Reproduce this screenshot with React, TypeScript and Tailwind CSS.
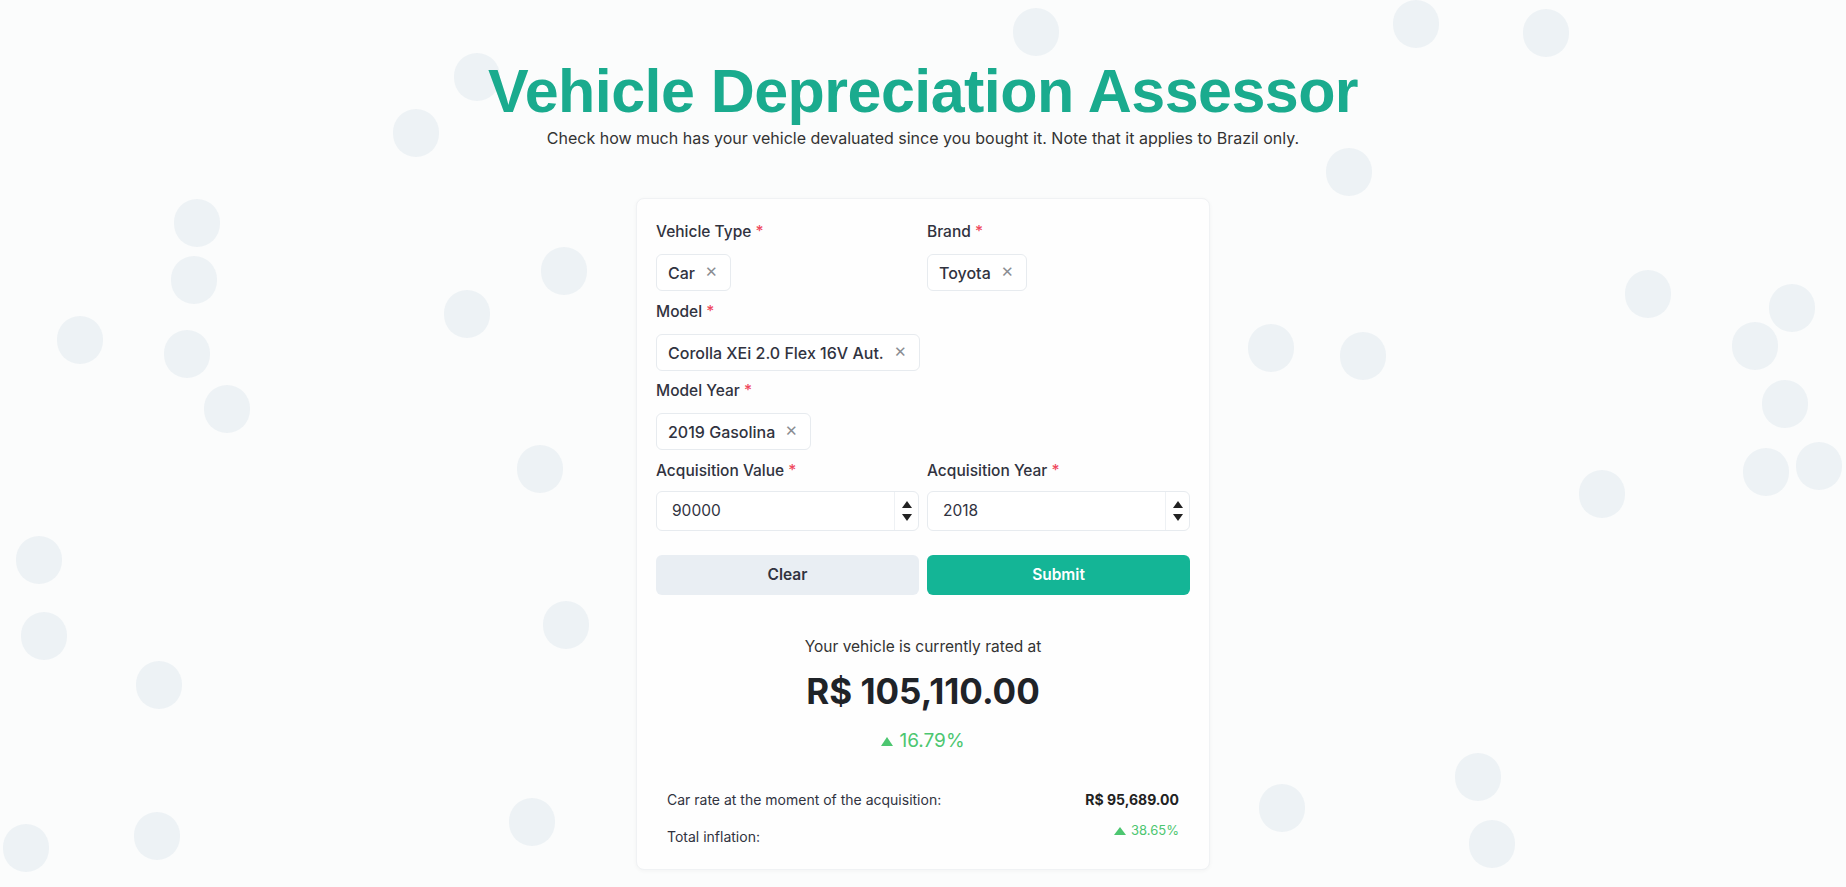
const BUBBLES: [number, number][] = [
  [477, 77], [416, 133], [197, 223], [194, 280], [80, 340], [187, 354], [227, 409],
  [564, 271], [467, 314], [540, 469], [39, 560], [44, 636], [159, 685], [566, 625],
  [26, 848], [157, 836], [532, 822], [1036, 32], [1416, 24], [1546, 33], [1349, 172],
  [1271, 348], [1363, 356], [1648, 294], [1792, 308], [1755, 346], [1785, 404],
  [1602, 494], [1766, 472], [1819, 466], [1282, 808], [1478, 777], [1492, 844],
];

function Label({ text }: { text: string }) {
  return (
    <div className="h-5 text-[15.5px] leading-5 font-medium text-[#31333f]">
      {text} <span className="text-[#ef4b5f]">*</span>
    </div>
  );
}

function Chip({ text }: { text: string }) {
  return (
    <div className="inline-flex h-[37px] items-center gap-[10px] rounded-md border border-[#e7ebef] bg-white pl-[11px] pr-[12px] text-[16px] font-medium text-[#31333f]">
      <span>{text}</span>
      <span className="text-[15px] text-[#8a8d93]">✕</span>
    </div>
  );
}

function NumberBox({ value }: { value: string }) {
  return (
    <div className="flex h-[40px] items-stretch rounded-md border border-[#e7ebef] bg-white">
      <div className="flex flex-1 items-center pl-[15px] text-[15.5px] text-[#31333f]">{value}</div>
      <div className="flex w-[24px] flex-col items-center justify-between border-l border-[#eef1f4] py-[9px]">
        <span className="h-0 w-0 border-x-[5px] border-b-[7px] border-x-transparent border-b-[#222]" />
        <span className="h-0 w-0 border-x-[5px] border-t-[7px] border-x-transparent border-t-[#222]" />
      </div>
    </div>
  );
}

function Up({ size }: { size: string }) {
  return <span className={`inline-block h-0 w-0 border-x-[6px] border-x-transparent border-b-[#4cc670] ${size}`} />;
}

export default function App() {
  return (
    <div className="relative h-[887px] w-full overflow-hidden bg-[#fbfcfc] font-['Inter','Liberation_Sans',sans-serif]">
      {BUBBLES.map(([x, y], i) => (
        <div
          key={i}
          className="absolute h-[48px] w-[46px] rounded-full bg-[#edf2f5]"
          style={{ left: x - 23, top: y - 24 }}
        />
      ))}

      <div className="relative flex flex-col items-center">
        <h1 className="mt-[57px] font-['Liberation_Sans',Arial,sans-serif] text-[61px] font-bold leading-[68px] tracking-[-0.55px] text-[#1aab8e]">
          Vehicle Depreciation Assessor
        </h1>
        <p className="mt-[3px] text-[16px] leading-5 text-[#333]">
          Check how much has your vehicle devaluated since you bought it. Note that it applies to Brazil only.
        </p>

        {/* Form card */}
        <div className="mt-[50px] w-[574px] rounded-lg border border-[#f0f2f4] bg-[#fefefe] px-[19px] pb-[25px] pt-[23px] shadow-[0_1px_4px_rgba(0,0,0,0.04)]">
          <div className="grid grid-cols-2 gap-x-2">
            <div>
              <Label text="Vehicle Type" />
              <div className="mt-3"><Chip text="Car" /></div>
            </div>
            <div>
              <Label text="Brand" />
              <div className="mt-3"><Chip text="Toyota" /></div>
            </div>
          </div>

          <div className="mt-[11px]">
            <Label text="Model" />
            <div className="mt-[12px]"><Chip text="Corolla XEi 2.0 Flex 16V Aut." /></div>
          </div>

          <div className="mt-[10px]">
            <Label text="Model Year" />
            <div className="mt-[12px]"><Chip text="2019 Gasolina" /></div>
          </div>

          <div className="mt-[11px] grid grid-cols-2 gap-x-2">
            <div>
              <Label text="Acquisition Value" />
              <div className="mt-[10px]"><NumberBox value="90000" /></div>
            </div>
            <div>
              <Label text="Acquisition Year" />
              <div className="mt-[10px]"><NumberBox value="2018" /></div>
            </div>
          </div>

          <div className="mt-6 grid grid-cols-2 gap-x-2">
            <button className="h-[40px] rounded-md bg-[#e9eef3] text-[15.5px] font-semibold text-[#31333f]">Clear</button>
            <button className="h-[40px] rounded-md bg-[#14b596] text-[15.5px] font-semibold text-white">Submit</button>
          </div>

          {/* Result */}
          <div className="mt-[42px] flex flex-col items-center">
            <p className="text-[15.5px] leading-5 text-[#333]">Your vehicle is currently rated at</p>
            <p className="mt-[14px] text-[35px] font-bold leading-[40px] text-[#1f2328]">R$ 105,110.00</p>
            <p className="mt-[18px] flex items-center gap-[6px] text-[19px] leading-6 text-[#4cc670]">
              <Up size="border-b-[9px]" />
              16.79%
            </p>
          </div>

          <div className="mt-[36px] flex flex-col gap-[15px] px-[11px] text-[14px] text-[#31333f]">
            <div className="flex h-[20px] items-center justify-between">
              <span>Car rate at the moment of the acquisition:</span>
              <span className="font-bold text-[#222]">R$ 95,689.00</span>
            </div>
            <div className="flex h-[20px] items-start justify-between">
              <span className="mt-[2px]">Total inflation:</span>
              <span className="-mt-[3px] flex items-center gap-[5px] text-[13px] text-[#4cc670]">
                <Up size="border-b-[8px]" />
                38.65%
              </span>
            </div>
          </div>
        </div>
      </div>
    </div>
  );
}
